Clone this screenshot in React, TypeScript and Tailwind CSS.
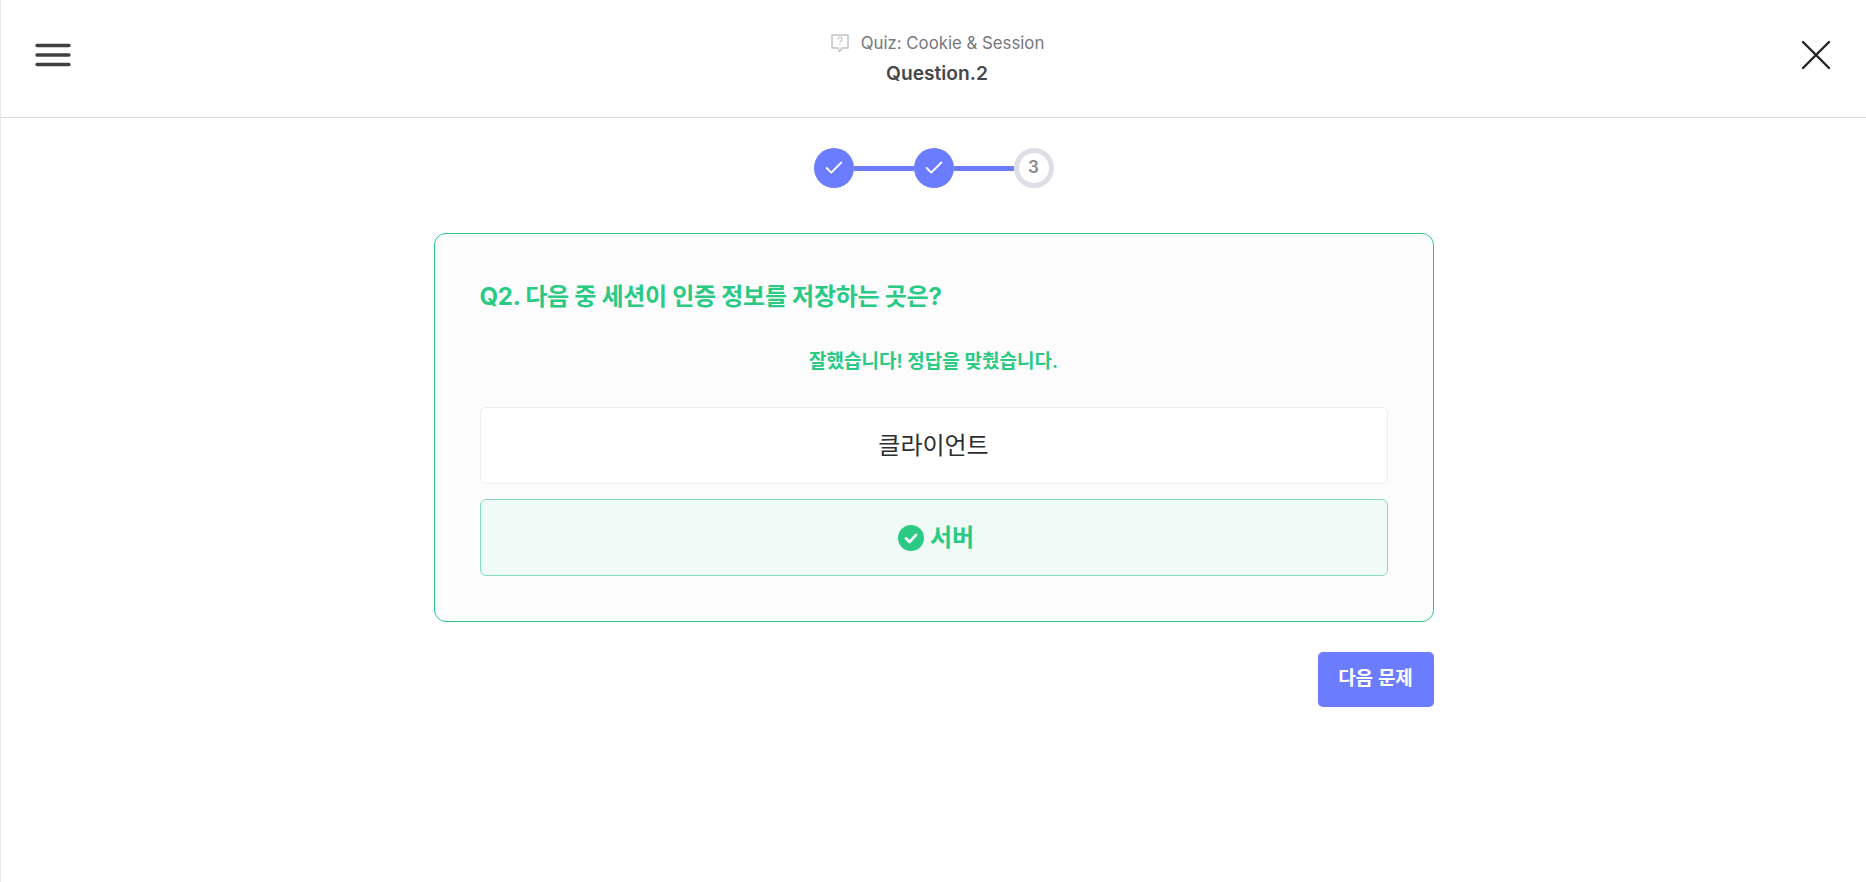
import { Check } from 'lucide-react';

function StepDone() {
  return (
    <div className="w-10 h-10 rounded-full bg-[#6c7cff] flex items-center justify-center shrink-0">
      <Check size={22} strokeWidth={2} className="text-white" />
    </div>
  );
}

export default function App() {
  return (
    <div className="min-h-[882px] bg-white border-l border-[#e8e8ec] font-['Inter','Noto_Sans_CJK_KR',sans-serif]">
      <header className="h-[118px] border-b border-[#d8d8dc] flex items-center justify-between pl-[34px] pr-[35px]">
        <svg width="36" height="24" viewBox="0 0 36 24" fill="none" className="mb-[7px]">
          <path d="M2 2.500h32M2 12h32M2 21.500h32" stroke="#404040" strokeWidth="3.400" strokeLinecap="round" />
        </svg>
        <div className="flex flex-col items-center ml-[2px]">
          <div className="flex items-center gap-[11px] text-[16.8px] leading-[24px] text-[#77777c]">
            <svg width="20" height="20" viewBox="0 0 20 20" fill="none">
              <path d="M2 2h16v13h-6l-2.500 3.500L8 15H2z" stroke="#c4c4c8" strokeWidth="1.500" strokeLinejoin="round" />
              <path d="M8 6.500c0-3 4-3 4 0 0 1.500-2 1.500-2 3M10 11v1" stroke="#c4c4c8" strokeWidth="1.200" />
            </svg>
            <span>Quiz: Cookie &amp; Session</span>
          </div>
          <div className="mt-[5px] text-[19.2px] leading-[26px] font-semibold text-[#47474c]">Question.2</div>
        </div>
        <svg width="30" height="30" viewBox="0 0 30 30" fill="none" className="mb-[8px]">
          <path d="M2 2l26 26M28 2L2 28" stroke="#222222" strokeWidth="2.400" strokeLinecap="round" />
        </svg>
      </header>

      <div className="mt-[30px] flex items-center justify-center">
        <StepDone />
        <div className="w-[60px] h-[5px] bg-[#6c7cff]" />
        <StepDone />
        <div className="w-[60px] h-[5px] bg-[#6c7cff]" />
        <div className="w-10 h-10 rounded-full border-[5px] border-[#dedee6] flex items-center justify-center text-[17px] font-semibold text-[#8a8a92]">
          3
        </div>
      </div>

      <div className="w-[1000px] mx-auto mt-[45px]">
        <div className="h-[389px] rounded-[12px] border border-[#2aca85] bg-[#fcfcfd] px-[45px] pt-[46px]">
          <h2 className="text-[24px] leading-[34px] font-bold tracking-[-0.27px] text-[#2aca85]">Q2. 다음 중 세션이 인증 정보를 저장하는 곳은?</h2>
          <p className="mt-[36px] h-[24px] text-center text-[19px] leading-[24px] font-semibold text-[#2aca85]">
            잘했습니다! 정답을 맞췄습니다.
          </p>
          <div className="mt-[33px] h-[77px] rounded-[6px] border border-[#eeeeee] bg-white flex items-center justify-center text-[24px] text-[#2e2e2e]">
            클라이언트
          </div>
          <div className="mt-[15px] h-[77px] rounded-[6px] border border-[#86dcb8] bg-[#f0faf6] flex items-center justify-center gap-[6px] pl-[5px] text-[24px] font-semibold text-[#2aca85]">
            <svg width="26" height="26" viewBox="0 0 26 26" fill="none">
              <circle cx="13" cy="13" r="13" fill="#2aca85" />
              <path d="M8 13.500l3.500 3.500L18 10" stroke="white" strokeWidth="2.600" strokeLinecap="round" strokeLinejoin="round" />
            </svg>
            <span>서버</span>
          </div>
        </div>
        <div className="mt-[30px] flex justify-end">
          <button className="w-[116px] h-[55px] rounded-[5px] bg-[#6c7cff] text-white text-[19px] font-semibold">다음 문제</button>
        </div>
      </div>
    </div>
  );
}
